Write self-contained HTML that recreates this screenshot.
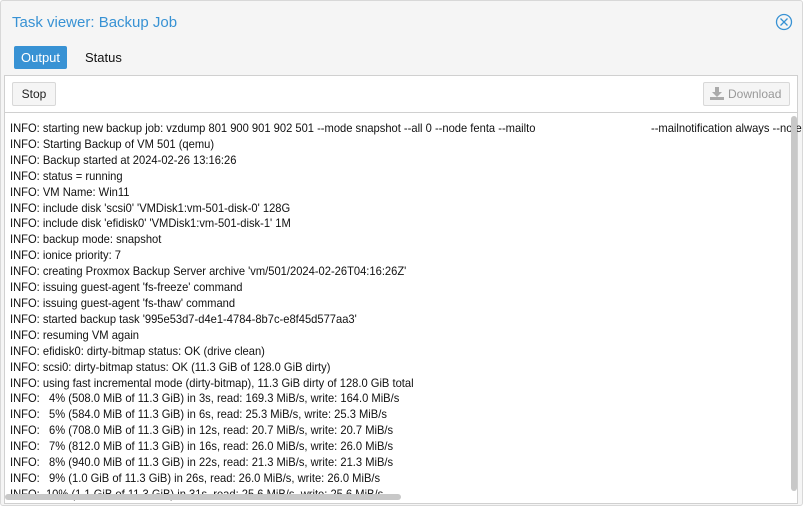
<!DOCTYPE html>
<html><head><style>
body{margin:0;width:803px;height:506px;background:#fff;font-family:"Liberation Sans",sans-serif;overflow:hidden}
.win{position:absolute;left:0;top:0;width:801px;height:504px;border:1px solid #d8d8d8;background:#f5f5f5;border-radius:3px}
.title{position:absolute;left:11px;top:13px;font-size:15px;color:#3892d4}
.close{position:absolute;left:774px;top:12px}
.tab{position:absolute;top:45px;height:23px;line-height:23px;font-size:13px;padding:0 7px;border-radius:2px}
.panel{position:absolute;left:3px;top:74px;width:792px;height:427px;background:#fff;border:1px solid #d0d0d0}
.btn{position:absolute;top:6px;height:22px;line-height:22px;border:1px solid #d8d8d8;background:#f5f5f5;border-radius:2px;font-size:12px}
.sep{position:absolute;left:0;right:0;top:36px;border-top:1px solid #d0d0d0}
.log{position:absolute;left:5px;top:45px;font-size:12px;line-height:15.9px;white-space:pre;color:#111;transform:scaleX(0.93);transform-origin:0 0;width:1000px}
.vs{position:absolute;left:786px;top:40px;width:6px;height:375px;background:#c8c8c8;border-radius:3px}
.hs{position:absolute;left:0;top:418px;width:396px;height:6px;background:#c8c8c8;border-radius:3px}
.r{position:absolute;left:646px;top:45px;font-size:12px;white-space:pre;transform:scaleX(0.93);transform-origin:0 0;color:#111}
</style></head><body>
<div class="win">
<div class="title">Task viewer: Backup Job</div>
<svg class="close" width="18" height="18" viewBox="0 0 18 18"><circle cx="9" cy="9" r="7.5" fill="none" stroke="#3892d4" stroke-width="1.3"/><path d="M5.5 5.5L12.5 12.5M12.5 5.5L5.5 12.5" stroke="#3892d4" stroke-width="1.3"/></svg>
<div class="tab" style="left:13px;background:#3892d4;color:#fff">Output</div>
<div class="tab" style="left:77px;color:#111">Status</div>
<div class="panel">
<div class="btn" style="left:7px;width:42px;text-align:center;color:#222">Stop</div>
<div class="btn" style="left:698px;width:85px;color:#999"><svg style="position:absolute;left:6px;top:4px" width="14" height="13" viewBox="0 0 14 13"><path d="M5 0h4v5h3l-5 5-5-5h3z" fill="#aaa"/><rect x="0" y="10" width="14" height="3" fill="#aaa"/></svg><span style="position:absolute;left:24px">Download</span></div>
<div class="sep"></div>
<div class="log">INFO: starting new backup job: vzdump 801 900 901 902 501 --mode snapshot --all 0 --node fenta --mailto
INFO: Starting Backup of VM 501 (qemu)
INFO: Backup started at 2024-02-26 13:16:26
INFO: status = running
INFO: VM Name: Win11
INFO: include disk 'scsi0' 'VMDisk1:vm-501-disk-0' 128G
INFO: include disk 'efidisk0' 'VMDisk1:vm-501-disk-1' 1M
INFO: backup mode: snapshot
INFO: ionice priority: 7
INFO: creating Proxmox Backup Server archive 'vm/501/2024-02-26T04:16:26Z'
INFO: issuing guest-agent 'fs-freeze' command
INFO: issuing guest-agent 'fs-thaw' command
INFO: started backup task '995e53d7-d4e1-4784-8b7c-e8f45d577aa3'
INFO: resuming VM again
INFO: efidisk0: dirty-bitmap status: OK (drive clean)
INFO: scsi0: dirty-bitmap status: OK (11.3 GiB of 128.0 GiB dirty)
INFO: using fast incremental mode (dirty-bitmap), 11.3 GiB dirty of 128.0 GiB total
INFO:   4% (508.0 MiB of 11.3 GiB) in 3s, read: 169.3 MiB/s, write: 164.0 MiB/s
INFO:   5% (584.0 MiB of 11.3 GiB) in 6s, read: 25.3 MiB/s, write: 25.3 MiB/s
INFO:   6% (708.0 MiB of 11.3 GiB) in 12s, read: 20.7 MiB/s, write: 20.7 MiB/s
INFO:   7% (812.0 MiB of 11.3 GiB) in 16s, read: 26.0 MiB/s, write: 26.0 MiB/s
INFO:   8% (940.0 MiB of 11.3 GiB) in 22s, read: 21.3 MiB/s, write: 21.3 MiB/s
INFO:   9% (1.0 GiB of 11.3 GiB) in 26s, read: 26.0 MiB/s, write: 26.0 MiB/s
INFO:  10% (1.1 GiB of 11.3 GiB) in 31s, read: 25.6 MiB/s, write: 25.6 MiB/s</div>
<div class="r">--mailnotification always --note</div>
<div class="vs"></div>
<div class="hs"></div>
</div>
</div>
</body></html>
